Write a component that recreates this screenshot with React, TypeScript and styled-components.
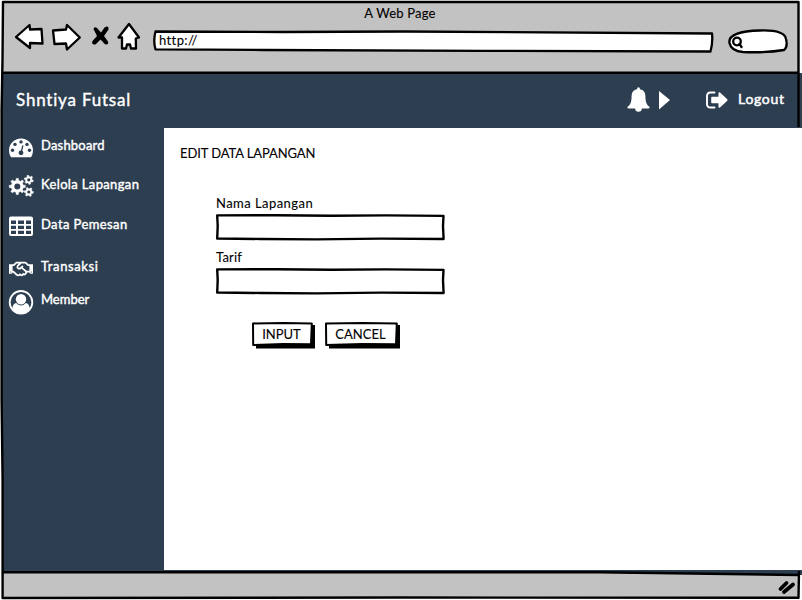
import React from "react";
import styled, { createGlobalStyle } from "styled-components";
import { FaRegHandshake } from "react-icons/fa";

const GlobalStyle = createGlobalStyle`
  * { box-sizing: border-box; }
  body { margin: 0; background: #fff; overflow: hidden; }
`;

const Window = styled.div`
  position: relative;
  width: 802px;
  height: 600px;
  overflow: hidden;
  display: flex;
  flex-direction: column;
  background: #fff;
  font-family: "Lato", "Open Sans", sans-serif;
  color: #000;
`;

const Outline = styled.svg`
  position: absolute;
  inset: 0;
  fill: none;
  stroke: #000;
  stroke-width: 2.4;
  stroke-linejoin: round;
  stroke-linecap: round;
  pointer-events: none;
  overflow: visible;
`;

const Chrome = styled.div`
  height: 71px;
  margin: 2px 4px 0 2px;
  flex: none;
  background: #c2c2c2;
  display: flex;
  flex-direction: column;
`;

const Label = styled.span<{ $size?: number; $track?: number; $strong?: number }>`
  display: block;
  margin: 0;
  font-size: ${(p) => p.$size ?? 13}px;
  letter-spacing: ${(p) => p.$track ?? 0}px;
  font-weight: 400;
  -webkit-text-stroke: ${(p) => p.$strong ?? 0.1}px currentColor;
  line-height: 18px;
  white-space: nowrap;
`;

const Title = styled.div`
  height: 20px;
  padding-top: 2px;
  text-align: center;
`;

const Toolbar = styled.div`
  display: flex;
  align-items: flex-start;
  padding-left: 12px;
`;

const Glyph = styled.svg<{ $top?: number; $gap?: number }>`
  display: block;
  flex: none;
  overflow: visible;
  fill: #fff;
  stroke: #000;
  stroke-width: 2.3;
  stroke-linejoin: round;
  stroke-linecap: round;
  margin-top: ${(p) => p.$top ?? 0}px;
  margin-left: ${(p) => p.$gap ?? 0}px;
`;

const Address = styled.div`
  position: relative;
  width: 560px;
  height: 22px;
  margin: 8px 0 0 12px;
  padding: 1px 0 0 6px;
`;

const AddressShape = styled(Glyph)`
  position: absolute;
  inset: 0;
`;

const Over = styled.div`
  position: relative;
`;

const Site = styled.div`
  flex: 1;
  margin-left: 2px;
  display: flex;
  flex-direction: column;
  min-height: 0;
  color: #fff;
  background: #2d3e50;
`;

const Header = styled.header`
  height: 55px;
  flex: none;
  display: flex;
  padding-left: 14px;
`;

const Brand = styled.div`
  padding-top: 18px;
`;

const Actions = styled.div`
  display: flex;
  margin-left: auto;
`;

const Logout = styled.div`
  width: 64px;
  margin-left: 10px;
  padding-top: 17px;
`;

const Body = styled.div`
  flex: 1;
  display: flex;
  align-items: flex-start;
  min-height: 0;
`;

const Sidebar = styled.nav`
  width: 162px;
  flex: none;
  padding: 8px 0 0 6px;
`;

const Item = styled.div<{ $height: number }>`
  height: ${(p) => p.$height}px;
  display: flex;
  gap: 7px;
`;

const IconBox = styled.div<{ $top?: number; $width?: number; $gap?: number }>`
  width: ${(p) => p.$width ?? 26}px;
  margin-left: ${(p) => p.$gap ?? 0}px;
  padding-top: ${(p) => p.$top ?? 0}px;
  display: flex;
  justify-content: center;
  color: #fff;
  font-size: 24px;
  svg { display: block; flex: none; }
`;

const Content = styled.main`
  flex: 1;
  background: #fff;
  color: #000;
  padding: 16px;
  height: 442px;
`;

const Form = styled.form`
  margin: 32px 0 0 36px;
`;

const Field = styled.label`
  display: block;
  height: 54px;
`;

const SketchBox = styled.span<{ $w: number; $h: number }>`
  position: relative;
  display: flex;
  align-items: center;
  justify-content: center;
  width: ${(p) => p.$w}px;
  height: ${(p) => p.$h}px;
  margin-top: 2px;
`;

const Input = styled.input`
  width: 224px;
  height: 20px;
  border: 0;
  outline: 0;
  background: transparent;
`;

const Buttons = styled.div`
  display: flex;
  gap: 10px;
  padding: 20px 0 0 36px;
`;

const Button = styled.button<{ $w: number }>`
  position: relative;
  display: flex;
  align-items: center;
  justify-content: center;
  width: ${(p) => p.$w}px;
  height: 27px;
  padding: 0 4px 3px 0;
  border: 0;
  background: transparent;
  font-family: inherit;
  color: #000;
`;

const Footer = styled.footer`
  height: 26px;
  flex: none;
  margin: 0 4px 2px 2px;
  background: #c2c2c2;
  display: flex;
  justify-content: flex-end;
  padding: 8px 3px 0 0;
`;

const FieldOutline = () => (
  <Outline width="229" height="27">
    <path d="M1.2 1.4 L60 1.2 L115 1.7 L170 1.4 L227.5 1.9 L227 12 L227.6 25 L165 24.6 L100 25.4 L45 25 L1.2 24.5 L1.7 12 Z" />
  </Outline>
);

const SketchButton = ({ w, children, track }: { w: number; children: string; track: number }) => (
  <Button type="button" $w={w}>
    <Outline width={w} height="27">
      <path d={`M4 3 H${w} V26.5 H4 Z`} fill="#000" stroke="none" />
      <path d={`M1 1.4 L${w / 2} 1 L${w - 3.2} 1.5 L${w - 4} 22.3 L${w / 2} 22 L1.2 23 Z`} fill="#fff" strokeWidth="2" />
    </Outline>
    <Over><Label $track={track}>{children}</Label></Over>
  </Button>
);

const Gauge = () => (
  <svg width="26" height="20" viewBox="0 0 26 20">
    <path d="M1 12.5 A12 12 0 0 1 25 12.5 Q25 16 23.3 18.7 Q23 19.2 22.5 19.2 H3.5 Q3 19.2 2.7 18.7 Q1 16 1 12.5Z" fill="#fff" />
    <g fill="#2d3e50">
      <circle cx="4.5" cy="12.2" r="1.7" /><circle cx="7" cy="6.4" r="1.7" />
      <circle cx="13" cy="3.9" r="1.7" /><circle cx="19" cy="6.4" r="1.7" />
      <circle cx="21.5" cy="12.2" r="1.7" /><circle cx="13" cy="14.8" r="2.4" />
    </g>
    <path d="M13.2 14 L14.8 7.8" stroke="#2d3e50" strokeWidth="1.3" strokeLinecap="round" />
  </svg>
);

const gear = (cx: number, cy: number, outer: number, inner: number, teeth: number, turn: number) => {
  const step = (Math.PI * 2) / teeth;
  const at = (r: number, a: number) => `${(cx + r * Math.cos(a)).toFixed(2)} ${(cy + r * Math.sin(a)).toFixed(2)}`;
  return (
    Array.from({ length: teeth }, (_, i) => {
      const a = i * step + turn;
      return `${i ? "L" : "M"}${at(inner, a - step * 0.26)} L${at(outer, a - step * 0.18)} L${at(outer, a + step * 0.18)} L${at(inner, a + step * 0.26)}`;
    }).join(" ") + "Z"
  );
};

const Cogs = () => (
  <svg width="26" height="22" viewBox="0 0 26 22">
    <g fill="#fff" stroke="#fff" strokeWidth="0.5" strokeLinejoin="round">
      <path d={gear(9.3, 11.4, 8.1, 6.1, 8, 0)} />
      <path d={gear(20.8, 4.8, 4.6, 3.4, 6, 0.3)} />
      <path d={gear(20.8, 17, 4.6, 3.4, 6, 0.1)} />
    </g>
    <g fill="#2d3e50">
      <circle cx="9.3" cy="11.4" r="3" />
      <circle cx="20.8" cy="4.8" r="1.6" />
      <circle cx="20.8" cy="17" r="1.6" />
    </g>
  </svg>
);

const Grid = () => (
  <svg width="24" height="20" viewBox="0 0 24 20">
    <path fillRule="evenodd" fill="#fff" d="M2 0.5H22Q24 0.5 24 2.5V18Q24 20 22 20H2Q0 20 0 18V2.5Q0 .5 2 .5Z M2 4.5V8H7V4.5Z M9 4.5V8H15V4.5Z M17 4.5V8H22V4.5Z M2 9.7V13H7V9.7Z M9 9.7V13H15V9.7Z M17 9.7V13H22V9.7Z M2 14.7V18H7V14.7Z M9 14.7V18H15V14.7Z M17 14.7V18H22V14.7Z" />
  </svg>
);

const Member = () => (
  <svg width="26" height="26" viewBox="0 0 26 26">
    <circle cx="13" cy="12.3" r="11.3" fill="none" stroke="#fff" strokeWidth="1.8" />
    <circle cx="13" cy="9.2" r="5.2" fill="#fff" />
    <path d="M4.2 18.5 Q5 13.2 8.2 13 Q13 18 17.8 13 Q21 13.2 21.8 18.5 Q18.5 23.5 13 23.5 Q7.5 23.5 4.2 18.5Z" fill="#fff" />
  </svg>
);

const Exit = () => (
  <svg width="22" height="18" viewBox="0 0 22 18">
    <path d="M8.5 1.5 H4.5 Q1 1.5 1 5 V13 Q1 16.5 4.5 16.5 H8.5" fill="none" stroke="#fff" strokeWidth="1.9" strokeLinecap="round" />
    <path d="M6 5.8 H12.5 V2 Q12.7 .8 14 1.6 L21.3 8.3 Q21.9 9 21.3 9.7 L14 16.5 Q12.7 17.2 12.5 16 V12.2 H6 Q5.2 12.2 5.2 11.4 V6.6 Q5.2 5.8 6 5.8Z" fill="#fff" />
  </svg>
);

const Bell = () => (
  <svg width="23" height="25" viewBox="0 0 23 25">
    <path fill="#fff" d="M11.5 0.3 Q13 .3 13 2.2 Q18.4 3.3 18.4 9 C18.4 15.5 20 18.3 22.7 20 Q22.7 21.6 21 21.6 H14.8 Q14.8 24.8 11.5 24.8 Q8.2 24.8 8.2 21.6 H2 Q.3 21.6 .3 20 C3 18.3 4.6 15.5 4.6 9 Q4.6 3.3 10 2.2 Q10 .3 11.5 .3Z" />
  </svg>
);

export default function App() {
  return (
    <Window>
      <GlobalStyle />
      <Chrome>
        <Title><Label $track={0.2}>A Web Page</Label></Title>
        <Toolbar>
          <Glyph width="30" height="28" $top={1}><path d="M2 14 L15.5 2 L16 6.5 L27.5 6 L28.5 20.5 L16 20 L16 25 Z" /></Glyph>
          <Glyph width="30" height="28" $top={1} $gap={7}><path d="M2 7.5 L15 6.5 L16 2 L28.8 14.5 L16 26.5 L15 20.5 L3.5 21 Z" /></Glyph>
          <Glyph width="18" height="20" $top={4} $gap={10}>
            <path d="M2.5 3 Q3 0 6 2 L10 6.5 L13.5 1.5 Q18 -1 17.5 3.5 L13 10 L17 15.5 Q18 19 14 18.3 L9.5 13.5 L4.5 18.5 Q0 19 1.5 15 L6 10Z" fill="#000" stroke="none" />
          </Glyph>
          <Glyph width="24" height="28" $top={1} $gap={8}><path d="M12 1 L22 14.5 L18.8 15.5 L19 25.5 L14 25.5 L13 21.5 L10 21.5 L9 25.5 L5 25.5 L5 14.5 L1.5 14.5 Z" /></Glyph>
          <Address>
            <AddressShape width="560" height="22">
              <path d="M2.5 1.5 L130 2 L250 1.5 L559 3.5 Q560 12 557.5 21.5 L330 20.8 L110 20 L2.5 19.3 Q0 11 2.5 1.5Z" />
            </AddressShape>
            <Over><Label $track={0.4}>http://</Label></Over>
          </Address>
          <Glyph width="60" height="25" $top={7} $gap={14.5}>
            <path d="M1.5 14 C0 6 12 2 32 1.5 C48 1 57 4 58 10 Q60 18 56 21 Q38 24 15 23 Q3 22 1.5 14Z" />
            <circle cx="9" cy="12.5" r="3.8" /><path d="M11.5 15 L13.5 18" />
          </Glyph>
        </Toolbar>
      </Chrome>

      <Site>
        <Header>
          <Brand><Label as="h1" $size={17} $track={0.8} $strong={0.4}>Shntiya Futsal</Label></Brand>
          <Actions>
            <IconBox $top={14} $width={23}><Bell /></IconBox>
            <Glyph width="12" height="20" $top={17} $gap={8}><path d="M1 1 L12 10 L1 19.5Z" fill="#fff" stroke="none" /></Glyph>
            <IconBox $top={18} $width={22} $gap={36}><Exit /></IconBox>
            <Logout><Label $size={14} $track={0.7} $strong={0.5}>Logout</Label></Logout>
          </Actions>
        </Header>
        <Body>
          <Sidebar>
            <Item $height={39}><IconBox $top={2}><Gauge /></IconBox><Label $strong={0.4} $track={0.2}>Dashboard</Label></Item>
            <Item $height={40}><IconBox><Cogs /></IconBox><Label $strong={0.4} $track={0.36}>Kelola Lapangan</Label></Item>
            <Item $height={42}><IconBox $top={1}><Grid /></IconBox><Label $strong={0.4} $track={0.4}>Data Pemesan</Label></Item>
            <Item $height={33}><IconBox><FaRegHandshake /></IconBox><Label $strong={0.4} $track={0.6}>Transaksi</Label></Item>
            <Item $height={30}><IconBox><Member /></IconBox><Label $strong={0.4}>Member</Label></Item>
          </Sidebar>
          <Content>
            <Label $track={-0.1}>EDIT DATA LAPANGAN</Label>
            <Form>
              <Field><Label $track={0.45}>Nama Lapangan</Label><SketchBox $w={229} $h={27}><FieldOutline /><Input /></SketchBox></Field>
              <Field><Label $track={0.2}>Tarif</Label><SketchBox $w={229} $h={27}><FieldOutline /><Input /></SketchBox></Field>
              <Buttons>
                <SketchButton w={63} track={0}>INPUT</SketchButton>
                <SketchButton w={75} track={0}>CANCEL</SketchButton>
              </Buttons>
            </Form>
          </Content>
        </Body>
      </Site>
      <Footer>
        <Glyph width="16" height="14"><path d="M1.5 9 L7.5 3 M5 12 L14 4.5" strokeWidth="3.8" /></Glyph>
      </Footer>
      <Outline width="802" height="600">
        <path d="M500 570 H802 V575 H798 L500 572Z" fill="#2d3e50" stroke="none" />
        <path d="M798.5 127 V2 L3 2 L2.5 60 L1.6 110 L1.6 400 L2.6 480 L2.6 598 L400 597.5 L798.5 597.8 L799 571" strokeLinecap="butt" />
        <path d="M3 72.7 H798 M3 572.3 H600 L798 575" />
      </Outline>
    </Window>
  );
}
